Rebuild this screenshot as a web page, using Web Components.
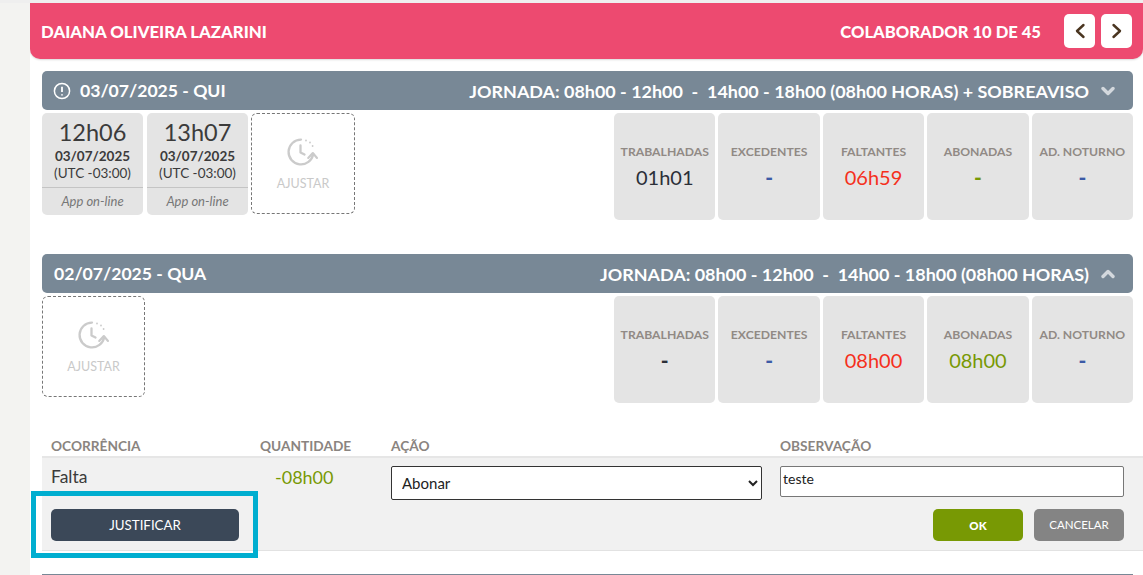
<!DOCTYPE html>
<html lang="pt-BR">
<head>
<meta charset="utf-8">
<title>Ponto</title>
<style>
html, body { margin: 0; height: 575px; overflow: hidden; background: #f3f3f1; }
body { font-family: Lato, "Liberation Sans", sans-serif; color: #333; }
</style>
</head>
<body>
<time-sheet></time-sheet>

<script>
const adjustIcon = `
  <svg width="36" height="30" viewBox="0 0 36 30" fill="none" stroke="#cbcbcb" stroke-width="2.3" stroke-linecap="round" stroke-linejoin="round">
    <path d="M16 2.6A12.4 12.4 0 1 0 28.2 17"/>
    <path d="M15.5 8.5v7l4 2"/>
    <path d="M23.2 21l4.6-5 4.2 5" stroke-width="2.1"/>
    <path d="M21 3.5h.01M25 5.5h.01M27.6 9h.01" stroke-width="1.8"/>
  </svg>`;

class PageHeader extends HTMLElement {
    constructor() {
        super();
        this.attachShadow({ mode: 'open' });
        this.shadowRoot.innerHTML = `
            <style>
                :host {
                    display: flex;
                    align-items: center;
                    justify-content: space-between;
                    height: 56px;
                    padding: 0 11px;
                    background: #ed4a70;
                    border-radius: 0 0 10px 10px;
                    box-shadow: 0 1px 2px rgba(0,0,0,.15);
                    color: #fff;
                    font-size: 16.8px;
                    font-weight: 900;
                    box-sizing: border-box;
                }
                .title { padding-top: 1px; }
                .right { display: flex; align-items: center; }
                .count { margin-right: 17px; font-size: 16.6px; padding-top: 1px; }
                button {
                    width: 31px;
                    height: 34px;
                    margin-left: 6px;
                    padding: 0;
                    border: 0;
                    border-radius: 5px;
                    background: #fff;
                    display: flex;
                    align-items: center;
                    justify-content: center;
                }
            </style>
            <span class="title"><slot></slot></span>
            <div class="right">
                <span class="count">${this.getAttribute('count')}</span>
                <button><svg width="12" height="16" viewBox="0 0 12 16" fill="none" stroke="#4a3520" stroke-width="2.4" stroke-linecap="round" stroke-linejoin="round"><path d="M9.5 2L3 8l6.5 6"/></svg></button>
                <button><svg width="12" height="16" viewBox="0 0 12 16" fill="none" stroke="#4a3520" stroke-width="2.4" stroke-linecap="round" stroke-linejoin="round"><path d="M2.5 2L9 8l-6.5 6"/></svg></button>
            </div>`;
    }
}

class DayBar extends HTMLElement {
    constructor() {
        super();
        this.attachShadow({ mode: 'open' });
        const up = this.hasAttribute('open');
        this.shadowRoot.innerHTML = `
            <style>
                :host {
                    display: flex;
                    align-items: center;
                    justify-content: space-between;
                    height: 39px;
                    padding: 0 18px 0 12px;
                    background: #788896;
                    border-radius: 5px;
                    color: #fff;
                    font-size: 17.6px;
                    font-weight: 700;
                    box-sizing: border-box;
                }
                .left, .right { display: flex; align-items: center; }
                .shift { font-size: 17.95px; }
                .info { margin: 0 9px 0 -1px; display: block; }
                .chev { margin-left: 12px; display: block; }
            </style>
            <div class="left">
                ${this.hasAttribute('warn') ? `<svg class="info" width="18" height="18" viewBox="0 0 18 18" fill="none" stroke="#fff" stroke-width="1.5"><circle cx="9" cy="9" r="7.6"/><path d="M9 4.8v5.2M9 12.2v1.2" stroke-width="1.8"/></svg>` : ''}
                <span>${this.getAttribute('day')}</span>
            </div>
            <div class="right">
                <span class="shift">${this.getAttribute('shift')}</span>
                <svg class="chev" width="14" height="10" viewBox="0 0 14 10" fill="none" stroke="#d3d8dd" stroke-width="3.4" stroke-linecap="round" stroke-linejoin="round"><path d="${up ? 'M2 7.5l5-5 5 5' : 'M2 2.5l5 5 5-5'}"/></svg>
            </div>`;
    }
}

class PunchCard extends HTMLElement {
    constructor() {
        super();
        this.attachShadow({ mode: 'open' });
        this.shadowRoot.innerHTML = `
            <style>
                :host {
                    display: flex;
                    flex-direction: column;
                    width: 101px;
                    height: 102px;
                    background: #e4e4e4;
                    border-radius: 5px;
                    text-align: center;
                    color: #3b3b3b;
                    overflow: hidden;
                }
                .time { font-size: 23.5px; line-height: 29px; margin-top: 5px; }
                .date { font-size: 13.5px; font-weight: 700; line-height: 16px; margin-top: 1px; }
                .zone { font-size: 13.5px; line-height: 18px; }
                .src {
                    margin-top: auto;
                    height: 27px;
                    line-height: 27px;
                    border-top: 1px solid #c4c4c4;
                    font-size: 13px;
                    font-style: italic;
                    color: #777;
                }
            </style>
            <div class="time">${this.getAttribute('time')}</div>
            <div class="date">${this.getAttribute('date')}</div>
            <div class="zone">(UTC -03:00)</div>
            <div class="src">App on-line</div>`;
    }
}

class AdjustCard extends HTMLElement {
    constructor() {
        super();
        this.attachShadow({ mode: 'open' });
        this.shadowRoot.innerHTML = `
            <style>
                :host {
                    display: flex;
                    flex-direction: column;
                    align-items: center;
                    box-sizing: border-box;
                    width: 103px;
                    height: 101px;
                    padding-top: 23px;
                    border: 1px dashed #777;
                    border-radius: 6px;
                    color: #c9c9c9;
                    font-size: 12.5px;
                }
                span { margin-top: 9px; }
                svg { display: block; }
            </style>
            ${adjustIcon}
            <span>AJUSTAR</span>`;
    }
}

class StatBox extends HTMLElement {
    constructor() {
        super();
        this.attachShadow({ mode: 'open' });
        const value = this.getAttribute('value');
        this.shadowRoot.innerHTML = `
            <style>
                :host {
                    display: flex;
                    flex-direction: column;
                    align-items: center;
                    width: 101.4px;
                    height: 107px;
                    padding-top: 31px;
                    box-sizing: border-box;
                    background: #e4e4e4;
                    border-radius: 5px;
                }
                .label { font-size: 12.2px; font-weight: 700; color: #918a85; line-height: 16px; white-space: nowrap; }
                .value { font-size: 20px; line-height: 26px; margin-top: 4px; color: var(--tone, #333); }
                .dash { font-weight: 900; font-size: 21px; }
            </style>
            <div class="label">${this.getAttribute('label')}</div>
            <div class="value ${value === '-' ? 'dash' : ''}" style="--tone:${this.getAttribute('tone') || '#2b2f38'}">${value}</div>`;
    }
}

class StatRow extends HTMLElement {
    constructor() {
        super();
        this.attachShadow({ mode: 'open' });
        this.shadowRoot.innerHTML = `
            <style>
                :host { display: flex; gap: 3px; margin-left: auto; }
            </style>
            <slot></slot>`;
    }
}

class DayBlock extends HTMLElement {
    constructor() {
        super();
        this.attachShadow({ mode: 'open' });
        this.shadowRoot.innerHTML = `
            <style>
                :host { display: block; margin: 0 10px 0 12px; }
                .body { display: flex; gap: 3px; margin-top: 3px; align-items: flex-start; }
                ::slotted(punch-card:nth-of-type(2)) { margin-left: 1px; }
            </style>
            <slot name="bar"></slot>
            <div class="body"><slot></slot></div>`;
    }
}

class OccurrenceTable extends HTMLElement {
    constructor() {
        super();
        this.attachShadow({ mode: 'open' });
        this.shadowRoot.innerHTML = `
            <style>
                :host { display: block; position: relative; margin: 39px 0 0 12px; }
                .head, .row {
                    display: grid;
                    grid-template-columns: 209px 131px 389px 344px;
                    padding-left: 9px;
                }
                .head {
                    height: 17px;
                    border-bottom: 2px solid #e6e6e6;
                    font-size: 13.7px;
                    font-weight: 700;
                    line-height: 13px;
                    color: #8a8480;
                }
                .panel {
                    height: 93px;
                    box-sizing: border-box;
                    background: #f1f1f1;
                    border-bottom: 1px solid #e2e2e2;
                    padding-top: 8px;
                }
                .name { font-size: 17.5px; line-height: 22px; color: #3b3b3b; }
                .qty { font-size: 18px; line-height: 22px; color: #789904; padding-left: 15px; }
                select {
                    box-sizing: border-box;
                    display: block;
                    width: 371px;
                    height: 34px;
                    padding: 0 0 1px 6px;
                    background: #fff;
                    border: 1px solid #333;
                    border-radius: 2px;
                    font: 15px Lato, sans-serif;
                    color: #222;
                }
                input {
                    box-sizing: border-box;
                    display: block;
                    width: 344px;
                    height: 31px;
                    padding: 0 2px 6px;
                    background: #fff;
                    border: 1px solid #777;
                    border-radius: 2px;
                    font: 14px Lato, sans-serif;
                    color: #222;
                }
                .actions {
                    display: flex;
                    justify-content: space-between;
                    padding: 9px 19px 0 9px;
                }
                .group { display: flex; gap: 11px; }
                button {
                    height: 32px;
                    border: 0;
                    border-radius: 5px;
                    color: #fff;
                    font: 13.3px Lato, sans-serif;
                    padding: 0;
                }
                .just { width: 188px; background: #3b4858; }
                .ok { width: 90px; background: #789904; font-weight: 900; font-size: 11.5px; }
                .cancel { width: 90px; background: #848484; font-size: 11.5px; padding-bottom: 2px; }
                .mark {
                    position: absolute;
                    left: -11px;
                    top: 52px;
                    width: 227px;
                    height: 67px;
                    box-sizing: border-box;
                    border: 5px solid #00aed0;
                    pointer-events: none;
                }
            </style>
            <div class="head">
                <span>OCORRÊNCIA</span><span>QUANTIDADE</span><span>AÇÃO</span><span>OBSERVAÇÃO</span>
            </div>
            <div class="panel">
                <div class="row">
                    <span class="name">Falta</span>
                    <span class="qty">-08h00</span>
                    <select><option>Abonar</option></select>
                    <input value="teste">
                </div>
                <div class="actions">
                    <button class="just">JUSTIFICAR</button>
                    <div class="group">
                        <button class="ok">OK</button>
                        <button class="cancel">CANCELAR</button>
                    </div>
                </div>
            </div>
            <div class="mark"></div>`;
    }
}

class TimeSheet extends HTMLElement {
    constructor() {
        super();
        this.attachShadow({ mode: 'open' });
        this.shadowRoot.innerHTML = `
            <style>
                :host {
                    display: block;
                    height: 575px;
                    margin-left: 30px;
                    padding-top: 3px;
                    box-sizing: border-box;
                    background: #fff;
                    overflow: hidden;
                }
                .first { margin-top: 12px; height: 183px; }
                .second { height: 146px; }
                .next { height: 1px; margin: 23px 10px 0 12px; background: #788896; }
                .top-line { position: absolute; left: 0; top: 0; right: 0; height: 3px; background: #efefef; }
            </style>
            <div class="top-line"></div>
            <page-header count="COLABORADOR 10 DE 45">DAIANA OLIVEIRA LAZARINI</page-header>
            <day-block class="first">
                <day-bar slot="bar" warn day="03/07/2025 - QUI" shift="JORNADA: 08h00 - 12h00 &nbsp;-&nbsp; 14h00 - 18h00 (08h00 HORAS) + SOBREAVISO"></day-bar>
                <punch-card time="12h06" date="03/07/2025"></punch-card>
                <punch-card time="13h07" date="03/07/2025"></punch-card>
                <adjust-card style="width:104px"></adjust-card>
                <stat-row>
                    <stat-box label="TRABALHADAS" value="01h01"></stat-box>
                    <stat-box label="EXCEDENTES" value="-" tone="#3c5aa6"></stat-box>
                    <stat-box label="FALTANTES" value="06h59" tone="#f5301c"></stat-box>
                    <stat-box label="ABONADAS" value="-" tone="#789904"></stat-box>
                    <stat-box label="AD. NOTURNO" value="-" tone="#3c5aa6"></stat-box>
                </stat-row>
            </day-block>
            <day-block class="second">
                <day-bar slot="bar" open day="02/07/2025 - QUA" shift="JORNADA: 08h00 - 12h00 &nbsp;-&nbsp; 14h00 - 18h00 (08h00 HORAS)"></day-bar>
                <adjust-card></adjust-card>
                <stat-row>
                    <stat-box label="TRABALHADAS" value="-"></stat-box>
                    <stat-box label="EXCEDENTES" value="-" tone="#3c5aa6"></stat-box>
                    <stat-box label="FALTANTES" value="08h00" tone="#f5301c"></stat-box>
                    <stat-box label="ABONADAS" value="08h00" tone="#789904"></stat-box>
                    <stat-box label="AD. NOTURNO" value="-" tone="#3c5aa6"></stat-box>
                </stat-row>
            </day-block>
            <occurrence-table></occurrence-table>
            <div class="next"></div>`;
    }
}

customElements.define('page-header', PageHeader);
customElements.define('day-bar', DayBar);
customElements.define('punch-card', PunchCard);
customElements.define('adjust-card', AdjustCard);
customElements.define('stat-box', StatBox);
customElements.define('stat-row', StatRow);
customElements.define('day-block', DayBlock);
customElements.define('occurrence-table', OccurrenceTable);
customElements.define('time-sheet', TimeSheet);
</script>
</body>
</html>
